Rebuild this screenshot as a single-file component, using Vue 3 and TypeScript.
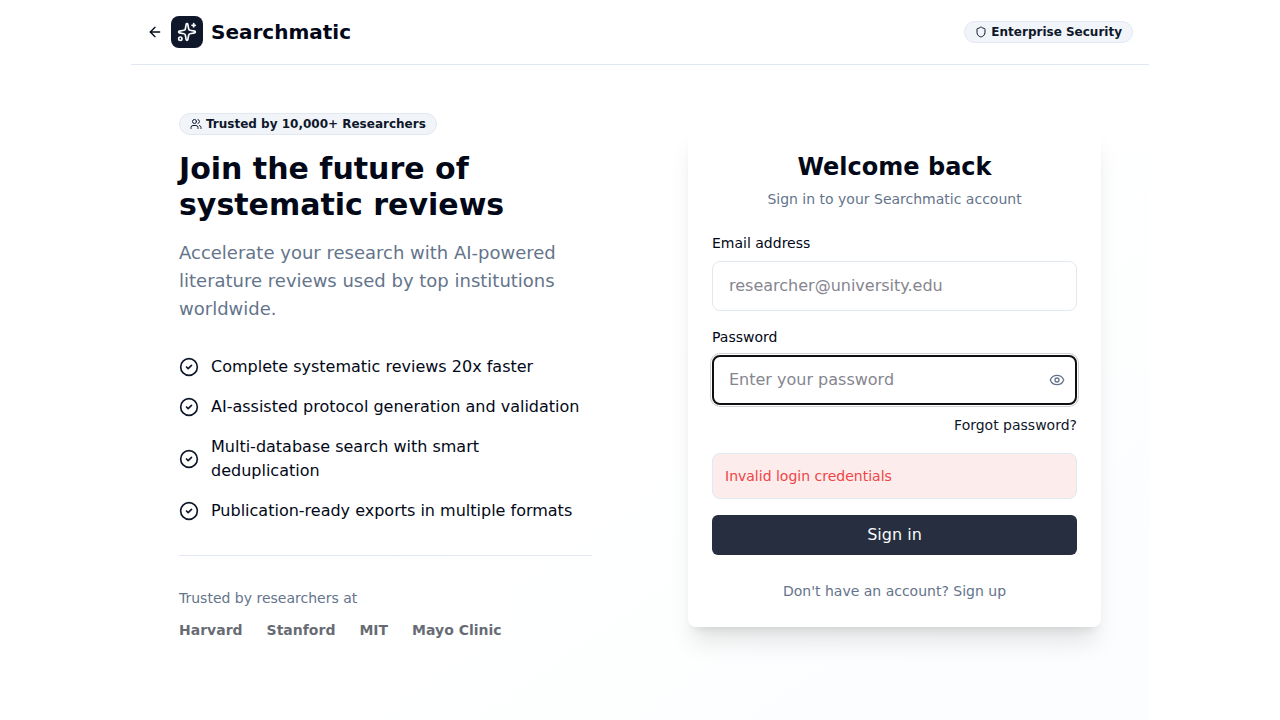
<script setup lang="ts">
import { ref } from 'vue'

const email = ref<string>('')
const password = ref<string>('')
const visible = ref<boolean>(false)
const error = ref<string>('Invalid login credentials')

const features: string[] = [
  'Complete systematic reviews 20x faster',
  'AI-assisted protocol generation and validation',
  'Multi-database search with smart deduplication',
  'Publication-ready exports in multiple formats',
]
const institutions: string[] = ['Harvard', 'Stanford', 'MIT', 'Mayo Clinic']
</script>

<template>
  <div class="page">
    <header class="topbar">
      <div class="brand">
        <button class="back" type="button" aria-label="Back">
          <svg class="icon" width="16" height="16" viewBox="0 0 24 24">
            <path d="m12 19-7-7 7-7" />
            <path d="M19 12H5" />
          </svg>
        </button>
        <span class="logo">
          <svg class="icon" width="20" height="20" viewBox="0 0 24 24">
            <path d="M11.017 2.814a1 1 0 0 1 1.966 0l1.051 5.558a2 2 0 0 0 1.594 1.594l5.558 1.051a1 1 0 0 1 0 1.966l-5.558 1.051a2 2 0 0 0-1.594 1.594l-1.051 5.558a1 1 0 0 1-1.966 0l-1.051-5.558a2 2 0 0 0-1.594-1.594l-5.558-1.051a1 1 0 0 1 0-1.966l5.558-1.051a2 2 0 0 0 1.594-1.594z" />
            <path d="M20 2v4" />
            <path d="M22 4h-4" />
            <circle cx="4" cy="20" r="2" />
          </svg>
        </span>
        <span class="name">Searchmatic</span>
      </div>
      <div class="badge">
        <svg class="icon" width="12" height="12" viewBox="0 0 24 24">
          <path d="M20 13c0 5-3.5 7.5-7.66 8.95a1 1 0 0 1-.67-.01C7.5 20.5 4 18 4 13V6a1 1 0 0 1 1-1c2 0 4.5-1.2 6.24-2.72a1.17 1.17 0 0 1 1.52 0C14.51 3.81 17 5 19 5a1 1 0 0 1 1 1z" />
        </svg>
        <span>Enterprise Security</span>
      </div>
    </header>

    <main class="content">
      <section class="pitch">
        <div class="badge">
          <svg class="icon" width="12" height="12" viewBox="0 0 24 24">
            <path d="M16 21v-2a4 4 0 0 0-4-4H6a4 4 0 0 0-4 4v2" />
            <path d="M16 3.128a4 4 0 0 1 0 7.744" />
            <path d="M22 21v-2a4 4 0 0 0-3-3.87" />
            <circle cx="9" cy="7" r="4" />
          </svg>
          <span>Trusted by 10,000+ Researchers</span>
        </div>
        <h1>Join the future of systematic reviews</h1>
        <p class="lead">
          Accelerate your research with AI-powered literature reviews used by top institutions worldwide.
        </p>
        <ul class="features">
          <li v-for="feature in features" :key="feature">
            <svg class="icon" width="20" height="20" viewBox="0 0 24 24">
              <circle cx="12" cy="12" r="10" />
              <path d="m9 12 2 2 4-4" />
            </svg>
            <span>{{ feature }}</span>
          </li>
        </ul>
        <div class="trust">
          <p>Trusted by researchers at</p>
          <div class="institutions">
            <span v-for="name in institutions" :key="name">{{ name }}</span>
          </div>
        </div>
      </section>

      <section class="card">
        <h2>Welcome back</h2>
        <p class="subtitle">Sign in to your Searchmatic account</p>
        <form @submit.prevent>
          <div class="field">
            <label for="email">Email address</label>
            <input id="email" v-model="email" type="email" placeholder="researcher@university.edu" />
          </div>
          <div class="field">
            <label for="password">Password</label>
            <div class="control">
              <input
                id="password"
                v-model="password"
                class="active"
                :type="visible ? 'text' : 'password'"
                placeholder="Enter your password"
              />
              <button class="reveal" type="button" aria-label="Show password" @click="visible = !visible">
                <svg class="icon" width="16" height="16" viewBox="0 0 24 24">
                  <path d="M2.062 12.348a1 1 0 0 1 0-.696 10.75 10.75 0 0 1 19.876 0 1 1 0 0 1 0 .696 10.75 10.75 0 0 1-19.876 0" />
                  <circle cx="12" cy="12" r="3" />
                </svg>
              </button>
            </div>
            <a class="forgot" href="#">Forgot password?</a>
          </div>
          <div v-if="error" class="alert" role="alert">{{ error }}</div>
          <button class="submit" type="submit">Sign in</button>
        </form>
        <button class="switch" type="button">Don't have an account? Sign up</button>
      </section>
    </main>
  </div>
</template>

<style>
body {
  margin: 0;
  background: #fff;
}
</style>

<style scoped>
.page,
.page * {
  box-sizing: border-box;
}
.page {
  max-width: 1018px;
  min-height: 100vh;
  margin: 0 auto;
  background: linear-gradient(to bottom right, #fff, #fff 50%, #fbfdfe);
  color: #020817;
  font: 16px/24px "DejaVu Sans", sans-serif;
}
h1,
h2,
p,
ul {
  margin: 0;
  padding: 0;
}
button,
input {
  margin: 0;
  font: inherit;
}
button {
  padding: 0;
  border: 0;
  background: none;
  color: inherit;
  cursor: pointer;
}
.icon {
  flex: none;
  display: block;
  fill: none;
  stroke: currentColor;
  stroke-width: 2;
  stroke-linecap: round;
  stroke-linejoin: round;
}
.topbar {
  display: flex;
  align-items: center;
  justify-content: space-between;
  padding: 16px;
  border-bottom: 1px solid #e2e8f0;
}
.brand {
  display: flex;
  align-items: center;
  gap: 8px;
}
.logo {
  display: grid;
  place-items: center;
  width: 32px;
  height: 32px;
  border-radius: 8px;
  background: #0f172a;
  color: #f8fafc;
}
.name {
  font-size: 20px;
  line-height: 28px;
  font-weight: 700;
}
.badge {
  display: flex;
  align-items: center;
  gap: 4px;
  width: fit-content;
  padding: 2px 10px;
  border: 1px solid #e2e8f0;
  border-radius: 11px;
  background: #f1f5f9;
  color: #0f172a;
  font-size: 12px;
  line-height: 16px;
  font-weight: 600;
}
.content {
  display: grid;
  grid-template-columns: repeat(auto-fit, minmax(320px, 1fr));
  gap: 96px;
  align-items: center;
  padding: 48px;
}
h1 {
  margin-top: 16px;
  font-size: 30px;
  line-height: 36px;
  font-weight: 700;
}
.lead {
  margin-top: 16px;
  color: #64748b;
  font-size: 18px;
  line-height: 28px;
}
.features {
  display: grid;
  gap: 16px;
  margin-top: 32px;
  list-style: none;
}
.features li {
  display: flex;
  align-items: center;
  gap: 12px;
}
.features .icon {
  color: #0f172a;
}
.trust {
  margin-top: 32px;
  padding-top: 32px;
  border-top: 1px solid #e2e8f0;
  color: #64748b;
  font-size: 14px;
  line-height: 20px;
}
.institutions {
  display: flex;
  flex-wrap: wrap;
  gap: 24px;
  margin-top: 12px;
  color: #020817;
  font-weight: 600;
  opacity: 0.6;
}
.card {
  padding: 24px;
  border-radius: 8px;
  background: #fff;
  box-shadow: 0 20px 25px -5px rgba(0, 0, 0, 0.1), 0 8px 10px -6px rgba(0, 0, 0, 0.1);
  font-size: 14px;
  line-height: 20px;
}
h2 {
  font-size: 24px;
  line-height: 34px;
  font-weight: 700;
  text-align: center;
}
.subtitle {
  margin-top: 5px;
  color: #64748b;
  text-align: center;
}
form {
  display: grid;
  gap: 16px;
  margin-top: 24px;
}
.field {
  display: grid;
  gap: 8px;
}
.control {
  position: relative;
}
input {
  display: block;
  width: 100%;
  height: 50px;
  padding: 0 16px 2px;
  border: 1px solid #e2e8f0;
  border-radius: 8px;
  outline: none;
  background: #fff;
  color: #020817;
  font-size: 16px;
}
input::placeholder {
  color: #85868f;
  opacity: 1;
}
input.active {
  padding: 0 48px 2px 15px;
  border: 2px solid #101014;
  box-shadow: 0 0 0 1px #fff, 0 0 0 2px #d0d0d4;
}
.reveal {
  position: absolute;
  top: 0;
  right: 0;
  display: grid;
  place-items: center;
  width: 40px;
  height: 100%;
  color: #64748b;
}
.forgot {
  justify-self: end;
  color: #0f172a;
  line-height: 24px;
  text-decoration: none;
}
.alert {
  padding: 12px;
  border: 1px solid #e2e8f0;
  border-radius: 8px;
  background: #fdecec;
  color: #ef4444;
}
.submit {
  height: 40px;
  border-radius: 6px;
  background: #272e3f;
  color: #f8fafc;
  font-size: 16px;
}
.switch {
  display: block;
  margin: 24px auto 0;
  color: #64748b;
  line-height: 24px;
}
</style>
